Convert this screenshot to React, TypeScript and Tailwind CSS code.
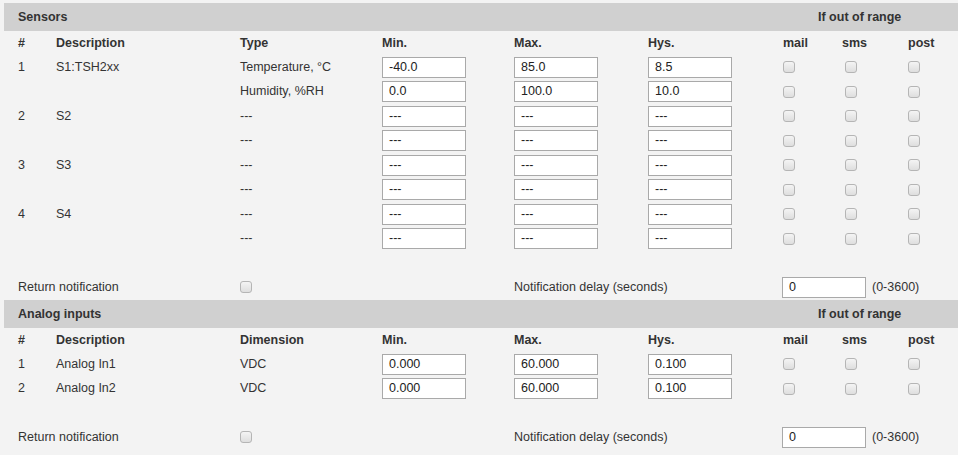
import React from 'react';

const COLS = 'grid grid-cols-[38px_184px_142px_132px_134px_135px_59px_66px_1fr] items-center';

type Row = { no?: string; desc?: string; type: string; min: string; max: string; hys: string };

const SENSORS: Row[] = [
  { no: '1', desc: 'S1:TSH2xx', type: 'Temperature, °C', min: '-40.0', max: '85.0', hys: '8.5' },
  { type: 'Humidity, %RH', min: '0.0', max: '100.0', hys: '10.0' },
  { no: '2', desc: 'S2', type: '---', min: '---', max: '---', hys: '---' },
  { type: '---', min: '---', max: '---', hys: '---' },
  { no: '3', desc: 'S3', type: '---', min: '---', max: '---', hys: '---' },
  { type: '---', min: '---', max: '---', hys: '---' },
  { no: '4', desc: 'S4', type: '---', min: '---', max: '---', hys: '---' },
  { type: '---', min: '---', max: '---', hys: '---' },
];

const ANALOG: Row[] = [
  { no: '1', desc: 'Analog In1', type: 'VDC', min: '0.000', max: '60.000', hys: '0.100' },
  { no: '2', desc: 'Analog In2', type: 'VDC', min: '0.000', max: '60.000', hys: '0.100' },
];

function Box() {
  return <span className="block w-[12px] h-[12px] rounded-[3px] border border-[#b5b5b5] bg-gradient-to-b from-[#f4f4f4] to-[#dedede]" />;
}

function Field({ value }: { value: string }) {
  return (
    <div className="w-[84px] h-[21px] bg-white border border-[#a9a9a9] pl-[6px] flex items-center text-[12.5px] text-[#222]">
      {value}
    </div>
  );
}

function Section({ title, third, rows }: { title: string; third: string; rows: Row[] }) {
  return (
    <div>
      <div className="h-[28px] bg-[#d0d0d0] flex items-center pl-[14px] font-bold text-[#333]">
        <span className="flex-1">{title}</span>
        <span className="w-[140px]">If out of range</span>
      </div>
      <div className={`${COLS} h-[24px] pl-[14px] font-bold text-[#333]`}>
        <span>#</span>
        <span>Description</span>
        <span>{third}</span>
        <span>Min.</span>
        <span>Max.</span>
        <span>Hys.</span>
        <span>mail</span>
        <span>sms</span>
        <span>post</span>
      </div>
      {rows.map((r, i) => (
        <div key={i} className={`${COLS} h-[24.5px] pl-[14px]`}>
          <span>{r.no}</span>
          <span>{r.desc}</span>
          <span>{r.type}</span>
          <Field value={r.min} />
          <Field value={r.max} />
          <Field value={r.hys} />
          <span><Box /></span>
          <span className="pl-[3px]"><Box /></span>
          <span><Box /></span>
        </div>
      ))}
      <div className="h-[23px]" />
      <div className={`${COLS} h-[26px] pl-[14px]`}>
        <span className="col-span-2">Return notification</span>
        <span className="col-span-2"><Box /></span>
        <span className="col-span-2">Notification delay (seconds)</span>
        <span className="col-span-3 flex items-center -ml-[1px]">
          <Field value="0" />
          <span className="ml-[6px]">(0-3600)</span>
        </span>
      </div>
    </div>
  );
}

export default function App() {
  return (
    <div className="w-[958px] h-[455px] bg-[#f3f3f3] pt-[3px] pl-[4px] text-[12.5px] text-[#333] font-['Liberation_Sans',Arial,sans-serif] overflow-hidden">
      <Section title="Sensors" third="Type" rows={SENSORS} />
      <Section title="Analog inputs" third="Dimension" rows={ANALOG} />
    </div>
  );
}
